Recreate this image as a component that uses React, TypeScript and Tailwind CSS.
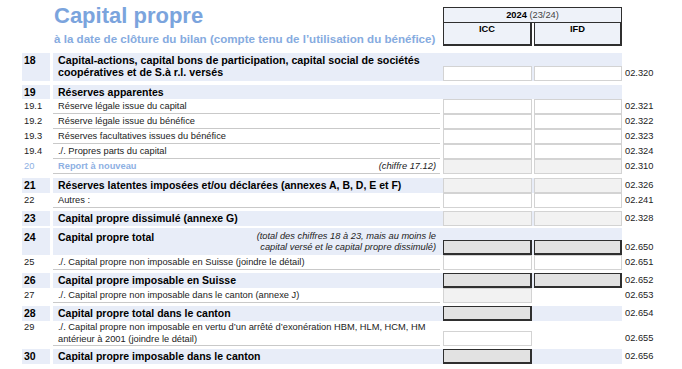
import type { ReactNode } from 'react';

type Box = 'white' | 'gray' | 'dark' | 'none';

const SHADE = 'bg-[#e8edf8]';

function Input({ kind, w }: { kind: Box; w: string }) {
  if (kind === 'none') return <div className={`${w} h-[15px]`} />;
  const style =
    kind === 'white'
      ? 'bg-white border border-[#d3d3d3]'
      : kind === 'gray'
        ? 'bg-[#f2f2f2] border border-[#d3d3d3]'
        : 'bg-[#e2e2e2] border border-[#2f2f2f] border-r-2 border-b-2';
  return <div className={`${w} h-[15px] ${style}`} />;
}

type RowProps = {
  num: string;
  label: ReactNode;
  shaded?: boolean;
  inputs?: [Box, Box];
  code?: string;
  h: string;
  mt?: string;
  numClass?: string;
  labelClass?: string;
  note?: ReactNode;
  pt?: string;
};

function Row({ num, label, shaded, inputs, code, h, mt = '', numClass = '', labelClass = '', note, pt = '' }: RowProps) {
  return (
    <div className={`flex ${h} ${mt}`}>
      <div className={`w-[28px] shrink-0 pl-[2px] ${pt} ${shaded ? SHADE : ''} ${numClass}`}>{num}</div>
      <div className={`ml-[3px] flex w-[569px] shrink-0 ${shaded ? SHADE : ''}`}>
        <div
          className={`flex w-[387px] shrink-0 justify-between pl-[5px] pr-[4px] ${pt} ${
            shaded ? '' : 'border-b border-[#c9c9c9]'
          } ${labelClass}`}
        >
          <div>{label}</div>
          {note}
        </div>
        <div className="ml-[3px] flex items-end gap-[2px]">
          {inputs && (
            <>
              <Input kind={inputs[0]} w="w-[89px]" />
              <Input kind={inputs[1]} w="w-[88px]" />
            </>
          )}
        </div>
      </div>
      <div className="flex items-end pl-[3px]">
        <div className="h-[15px] text-[9.3px] leading-[15px] text-[#222]">{code}</div>
      </div>
    </div>
  );
}

const BIG_NUM = 'text-[10.5px] font-bold leading-[15px]';
const SMALL_NUM = 'text-[9.3px] leading-[15px] text-[#222]';
const BIG_LABEL = 'text-[10.5px] font-bold leading-[15px]';
const SMALL_LABEL = 'text-[9.3px] leading-[15px] text-[#222]';

export default function App() {
  return (
    <div
      className="w-[682px] h-[369px] overflow-hidden bg-white text-black"
      style={{ fontFamily: '"Liberation Sans", Arial, sans-serif' }}
    >
      {/* header */}
      <div className="flex pl-[22px]">
        <div className="w-[421px] pl-[32px] pt-[4px]">
          <div className="text-[22px] font-bold leading-[24px] text-[#7ba4dd]">Capital propre</div>
          <div className="mt-[4px] whitespace-nowrap text-[11.6px] font-bold leading-[13px] text-[#86abe0]">
            à la date de clôture du bilan (compte tenu de l’utilisation du bénéfice)
          </div>
        </div>
        <div className="mt-[7px] w-[179px]">
          <div className="h-[16px] border border-[#2f2f2f] bg-[#eef2f9] text-center text-[9.3px] leading-[14px]">
            <span className="font-bold">2024</span> <span className="text-[#444]">(23/24)</span>
          </div>
          <div className="flex gap-[2px]">
            <div className="h-[23px] w-[89px] border border-t-0 border-[#2f2f2f] border-r-2 border-b-2 bg-[#eef2f9] text-center text-[9.3px] font-bold leading-[13px]">
              ICC
            </div>
            <div className="h-[23px] w-[88px] border border-t-0 border-[#2f2f2f] border-r-2 border-b-2 bg-[#eef2f9] text-center text-[9.3px] font-bold leading-[13px]">
              IFD
            </div>
          </div>
        </div>
      </div>

      {/* rows */}
      <div className="pl-[22px]">
        <Row
          num="18"
          shaded
          h="h-[28px]"
          mt="mt-[7px]"
          pt="pt-[1px]"
          numClass="text-[10.5px] font-bold leading-[12px]"
          labelClass="text-[10.7px] font-bold leading-[12px]"
          label={
            <>
              <div className="whitespace-nowrap">Capital-actions, capital bons de participation, capital social de sociétés</div>
              <div className="whitespace-nowrap">coopératives et de S.à r.l. versés</div>
            </>
          }
          inputs={['white', 'white']}
          code="02.320"
        />
        <Row num="19" shaded h="h-[14px]" mt="mt-[4px]" numClass={`${BIG_NUM} leading-[14px]`} labelClass={`${BIG_LABEL} leading-[14px]`} label="Réserves apparentes" />
        <Row num="19.1" h="h-[15px]" numClass={SMALL_NUM} labelClass={SMALL_LABEL} label="Réserve légale issue du capital" inputs={['white', 'white']} code="02.321" />
        <Row num="19.2" h="h-[15px]" numClass={SMALL_NUM} labelClass={SMALL_LABEL} label="Réserve légale issue du bénéfice" inputs={['white', 'white']} code="02.322" />
        <Row num="19.3" h="h-[15px]" numClass={SMALL_NUM} labelClass={SMALL_LABEL} label="Réserves facultatives issues du bénéfice" inputs={['white', 'white']} code="02.323" />
        <Row num="19.4" h="h-[15px]" numClass={SMALL_NUM} labelClass={SMALL_LABEL} label="./. Propres parts du capital" inputs={['white', 'white']} code="02.324" />
        <Row
          num="20"
          h="h-[15px]"
          numClass="text-[9.3px] leading-[15px] text-[#8db0e3]"
          labelClass="text-[9.3px] leading-[15px]"
          label={<span className="font-bold text-[#8db0e3]">Report à nouveau</span>}
          note={<span className="italic text-[#222]">(chiffre 17.12)</span>}
          inputs={['gray', 'gray']}
          code="02.310"
        />
        <Row
          num="21"
          shaded
          h="h-[15px]"
          mt="mt-[4px]"
          numClass={BIG_NUM}
          labelClass={BIG_LABEL}
          label="Réserves latentes imposées et/ou déclarées (annexes A, B, D, E et F)"
          inputs={['gray', 'gray']}
          code="02.326"
        />
        <Row num="22" h="h-[15px]" numClass={SMALL_NUM} labelClass={SMALL_LABEL} label="Autres :" inputs={['white', 'white']} code="02.241" />
        <Row
          num="23"
          shaded
          h="h-[15px]"
          mt="mt-[3px]"
          numClass={BIG_NUM}
          labelClass={BIG_LABEL}
          label="Capital propre dissimulé (annexe G)"
          inputs={['gray', 'gray']}
          code="02.328"
        />
        <Row
          num="24"
          shaded
          h="h-[27px]"
          mt="mt-[2px]"
          pt="pt-[3px]"
          numClass="text-[10.5px] font-bold leading-[12px]"
          labelClass="text-[10.5px] font-bold leading-[12px]"
          label="Capital propre total"
          note={
            <div className="text-right text-[9.3px] font-normal italic leading-[11px] text-[#222]">
              <div>(total des chiffres 18 à 23, mais au moins le</div>
              <div>capital versé et le capital propre dissimulé)</div>
            </div>
          }
          inputs={['dark', 'dark']}
          code="02.650"
        />
        <Row
          num="25"
          h="h-[15px]"
          numClass={SMALL_NUM}
          labelClass={SMALL_LABEL}
          label="./. Capital propre non imposable en Suisse (joindre le détail)"
          inputs={['white', 'white']}
          code="02.651"
        />
        <Row
          num="26"
          shaded
          h="h-[15px]"
          mt="mt-[3px]"
          numClass={BIG_NUM}
          labelClass={BIG_LABEL}
          label="Capital propre imposable en Suisse"
          inputs={['dark', 'dark']}
          code="02.652"
        />
        <Row
          num="27"
          h="h-[15px]"
          numClass={SMALL_NUM}
          labelClass={SMALL_LABEL}
          label="./. Capital propre non imposable dans le canton (annexe J)"
          inputs={['gray', 'none']}
          code="02.653"
        />
        <Row
          num="28"
          shaded
          h="h-[15px]"
          mt="mt-[3px]"
          numClass={BIG_NUM}
          labelClass={BIG_LABEL}
          label="Capital propre total dans le canton"
          inputs={['dark', 'none']}
          code="02.654"
        />
        <Row
          num="29"
          h="h-[25px]"
          pt="pt-[0px]"
          numClass="text-[9.3px] leading-[12px] text-[#222]"
          labelClass="text-[9.3px] leading-[12px] text-[#222]"
          label={
            <>
              <div className="whitespace-nowrap">./. Capital propre non imposable en vertu d’un arrêté d’exonération HBM, HLM, HCM, HM</div>
              <div>antérieur à 2001 (joindre le détail)</div>
            </>
          }
          inputs={['white', 'none']}
          code="02.655"
        />
        <Row
          num="30"
          shaded
          h="h-[15px]"
          mt="mt-[3px]"
          numClass={BIG_NUM}
          labelClass={BIG_LABEL}
          label="Capital propre imposable dans le canton"
          inputs={['dark', 'none']}
          code="02.656"
        />
      </div>
    </div>
  );
}
